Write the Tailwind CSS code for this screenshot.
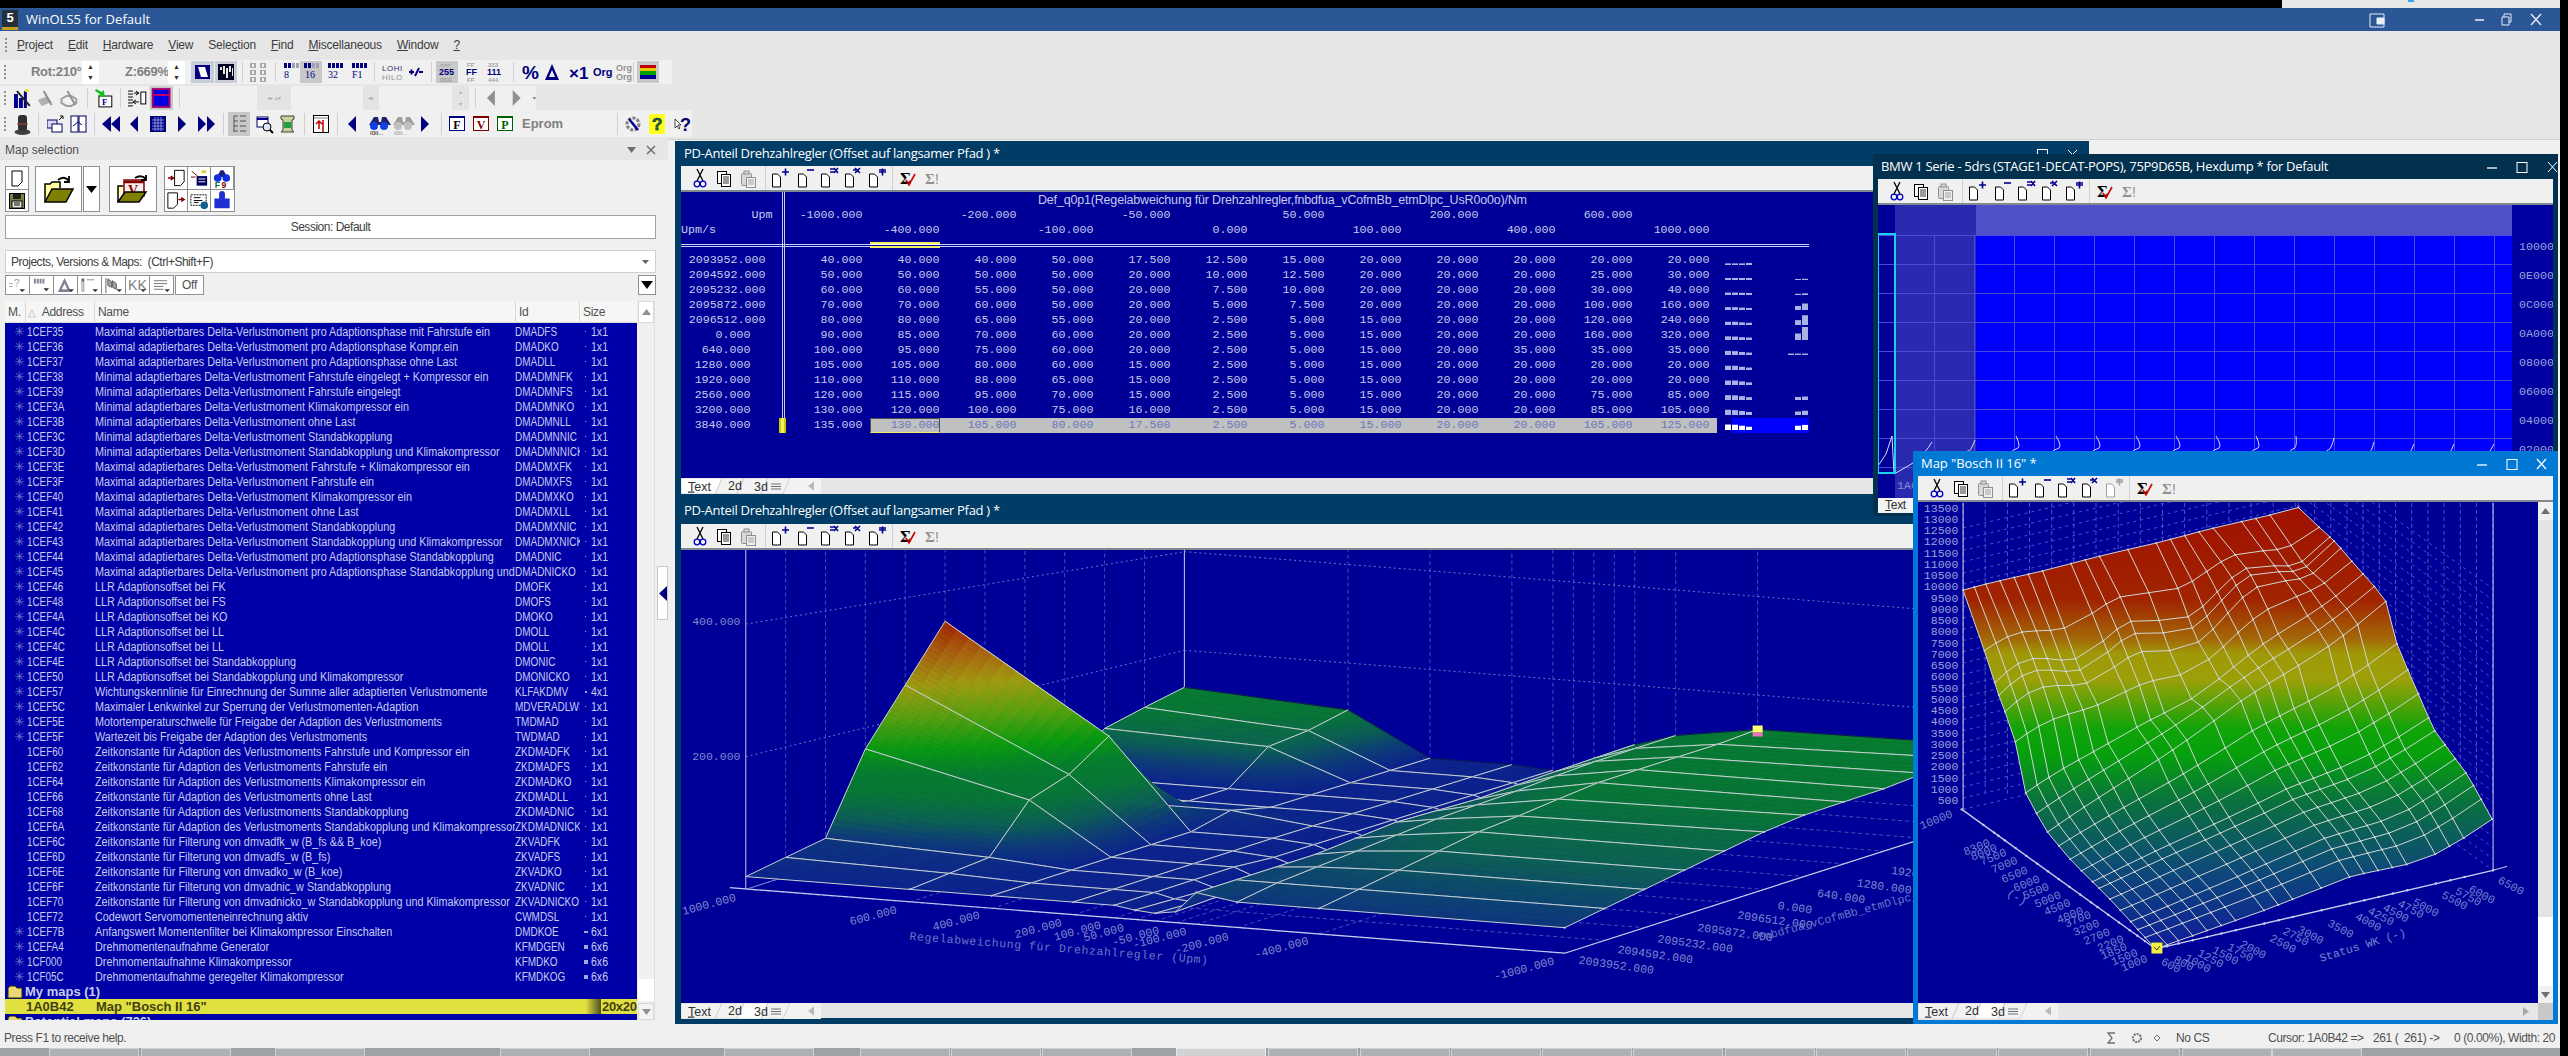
<!DOCTYPE html>
<html lang="en">
<head>
<meta charset="UTF-8">
<title>WinOLS5 for Default</title>
<script src="https://cdn.jsdelivr.net/npm/@tailwindcss/browser@4"></script>
</head>
<body class="w-[2568px] h-[1056px] overflow-hidden bg-black [font-family:'Liberation_Sans',sans-serif] text-[12px]">
<div class="w-[2560px] h-full flex flex-col">

  <!-- top strip -->
  <div class="h-[8px] flex shrink-0">
    <div class="w-[2282px] bg-black"></div>
    <div class="flex-1 bg-[#e8e8e8] pl-[126px]"><div class="w-[6px] h-[2px] bg-[#3ba4e8]"></div></div>
  </div>

  <!-- title bar -->
  <div class="h-[23px] shrink-0 bg-[#2b5797] flex items-center text-white">
    <div class="ml-[2px] w-[16px] h-[20px] bg-[#24303a] text-white text-[13px] font-bold leading-[16px] text-center border-b-[3px] border-[#c8a020]">5</div>
    <div class="ml-[8px] text-[13px] [font-family:'Open_Sans',sans-serif] tracking-[0.05px]">WinOLS5 for Default</div>
    <svg class="ml-auto mr-[7px]" width="184" height="20" viewBox="0 0 184 20" fill="none" stroke="#e8eef8">
      <path d="M1 4h14v13H1z" /><path d="M8 8h7v6H8z" fill="#e8eef8" />
      <path d="M106 10h9" stroke-width="1.5" />
      <path d="M133 7h7v8h-7zM135 7V4h7v8h-2" />
      <path d="M162 4l10 11M172 4l-10 11" stroke-width="1.4" />
    </svg>
  </div>

  <!-- menu -->
  <div class="h-[27px] shrink-0 bg-[#e6e6e6] flex items-center pl-[5px] text-[12px] text-[#3c3c3c] tracking-[-0.2px]">
    <div class="w-[2px] h-[14px] mr-[10px] border-l-2 border-dotted border-[#909090]"></div>
    <div class="flex gap-[15px]">
      <span><u>P</u>roject</span><span><u>E</u>dit</span><span><u>H</u>ardware</span><span><u>V</u>iew</span><span>Sele<u>c</u>tion</span><span><u>F</u>ind</span><span><u>M</u>iscellaneous</span><span><u>W</u>indow</span><span><u>?</u></span>
    </div>
  </div>

  <!-- toolbars -->
  <div class="h-[81px] shrink-0 bg-[#e6e6e6] flex flex-col">
    <!-- row 1 -->
    <div class="mt-[2px] h-[24px] w-[672px] bg-[#f0f0f0] flex items-center pl-[4px]">
      <div class="w-[2px] h-[14px] border-l-2 border-dotted border-[#909090]"></div>
      <div class="ml-[25px] w-[51px] text-[13px] font-bold tracking-[-0.3px] whitespace-nowrap text-[#808080]">Rot:210°</div>
      <div class="w-[17px] h-[23px] bg-white flex flex-col items-center justify-around text-[7px] leading-none text-[#333]"><span>▲</span><span>▼</span></div>
      <div class="ml-[26px] w-[43px] text-[13px] font-bold tracking-[-0.3px] whitespace-nowrap text-[#808080]">Z:669%</div>
      <div class="w-[17px] h-[23px] bg-white flex flex-col items-center justify-around text-[7px] leading-none text-[#333]"><span>▲</span><span>▼</span></div>
      <svg class="ml-[6px]" width="47" height="22" viewBox="0 0 47 22">
        <rect width="23" height="22" fill="#c8ccd4" /><rect x="24" width="22" height="22" fill="#c8ccd4" />
        <rect x="4" y="4" width="15" height="14" fill="#000080" /><path d="M7 6h7l3 10H10z" fill="#fff" />
        <rect x="27" y="3" width="16" height="16" fill="#000020" /><path d="M29 6h2v3h-2zM32 5h2v8h-2zM35 7h2v10h-2zM38 5h2v6h-2zM41 7h1v8h-1z" fill="#e8e8e8" />
      </svg>
      <div class="ml-[4px] w-px h-[20px] bg-[#d0d0d0]"></div>
      <svg class="ml-[7px]" width="17" height="20" viewBox="0 0 17 20"><path d="M0 1h6v5H0zM10 1h6v5h-6zM0 8h6v5H0zM10 8h6v5h-6zM0 15h6v5H0zM10 15h6v5h-6z" fill="#a8a8a8" /><path d="M2 2h2v3H2zM12 2h2v3h-2zM2 9h2v3H2zM12 9h2v3h-2zM2 16h2v3H2zM12 16h2v3h-2z" fill="#f0f0f0" /></svg>
      <div class="ml-[8px] w-px h-[20px] bg-[#d0d0d0]"></div>
      <svg class="ml-[4px]" width="92" height="22" viewBox="0 0 92 22" font-family="Liberation Serif" font-size="10" fill="#000080">
        <rect x="20" width="22" height="22" fill="#c8c8c8" />
        <path d="M4 2h3v5H4zM8 2h3v5H8z" /><path d="M12 2h3v5h-3zM16 2h3v5h-3z" fill="#a0a0b0" /><text x="4" y="17">8</text>
        <path d="M24 2h3v5h-3zM28 2h3v5h-3z" /><path d="M32 2h3v5h-3zM36 2h3v5h-3z" fill="#a0a0b0" /><text x="25" y="17">16</text>
        <path d="M48 2h3v5h-3zM52 2h3v5h-3zM56 2h3v5h-3zM60 2h3v5h-3z" /><text x="48" y="17">32</text>
        <path d="M72 2h3v5h-3zM76 2h3v5h-3zM80 2h3v5h-3zM84 2h3v5h-3z" /><text x="72" y="17">F1</text>
      </svg>
      <div class="ml-[2px] w-px h-[20px] bg-[#d0d0d0]"></div>
      <svg class="ml-[7px]" width="42" height="20" viewBox="0 0 42 20" font-family="Liberation Sans" font-size="8" letter-spacing="0.5">
        <text x="0" y="9" fill="#303060">LOHI</text><text x="0" y="18" fill="#909090">HILO</text>
        <path d="M27 10h5M29.5 7.500v5M33 14l4-8M37 10h4" stroke="#000080" stroke-width="2" />
      </svg>
      <div class="ml-[7px] w-px h-[20px] bg-[#d0d0d0]"></div>
      <svg class="ml-[4px]" width="68" height="22" viewBox="0 0 68 22" font-family="Liberation Sans" font-size="9" font-weight="bold">
        <rect width="22" height="22" fill="#c8c8c8" />
        <text x="4" y="6" fill="#a0a0a0" font-size="6">&lt;&gt;&gt;</text><text x="3" y="14" fill="#000080">255</text><text x="4" y="21" fill="#a0a0a0" font-size="6">DEE</text>
        <text x="31" y="6" fill="#a0a0a0" font-size="6">FF</text><text x="30" y="14" fill="#000080">FF</text><text x="31" y="21" fill="#a0a0a0" font-size="6">FF</text>
        <text x="52" y="6" fill="#a0a0a0" font-size="6">333</text><text x="51" y="14" fill="#000080">111</text><text x="52" y="21" fill="#a0a0a0" font-size="6">444</text>
      </svg>
      <div class="ml-[9px] w-px h-[20px] bg-[#d0d0d0]"></div>
      <svg class="ml-[8px]" width="112" height="22" viewBox="0 0 112 22" font-family="Liberation Sans" font-weight="bold" fill="#000080">
        <text x="0" y="18" font-size="19">%</text>
        <path d="M30 3l-7 16h14zM30 9l-3 7h6z" fill-rule="evenodd" />
        <text x="47" y="18" font-size="17">×1</text>
        <text x="71" y="15" font-size="11">Org</text>
        <text x="94" y="10" font-size="9" fill="#909090">Org</text><text x="94" y="19" font-size="9" fill="#909090">Org</text>
      </svg>
      <div class="ml-[-1px] w-px h-[20px] bg-[#d0d0d0]"></div>
      <svg class="ml-[3px]" width="22" height="22" viewBox="0 0 22 22"><rect width="22" height="22" fill="#c8c8c8" /><rect x="3" y="4" width="16" height="3" fill="#c00000" /><rect x="3" y="7" width="16" height="3" fill="#e8c800" /><rect x="3" y="10" width="16" height="4" fill="#00a000" /><rect x="3" y="14" width="16" height="4" fill="#000090" /></svg>
    </div>
    <!-- row 2 -->
    <div class="mt-[2px] h-[24px] w-[536px] bg-[#f0f0f0] flex items-center pl-[4px]">
      <div class="w-[2px] h-[14px] border-l-2 border-dotted border-[#909090]"></div>
      <svg class="ml-[8px]" width="66" height="20" viewBox="0 0 66 20">
        <path d="M0 6h4v14H0zM5 10h4v10H5zM10 3h3v17h-3z" fill="#000090" /><path d="M3 3l13 15" stroke="#202020" stroke-width="2" /><path d="M11 1h4v3h-4z" fill="#e8e040" />
        <path d="M24 12l10-4 4 6-10 4z" fill="#b0b0b0" /><path d="M30 3l8 14" stroke="#909090" stroke-width="2" />
        <path d="M48 11l5-3h5l5 3v4l-5 3h-5l-5-3z" fill="none" stroke="#a0a0a0" stroke-width="2" /><path d="M54 3l8 14" stroke="#909090" stroke-width="2" />
      </svg>
      <div class="ml-[8px] w-px h-[20px] bg-[#d0d0d0]"></div>
      <svg class="ml-[7px]" width="18" height="20" viewBox="0 0 18 20"><rect x="4" y="8" width="13" height="11" fill="#fff" stroke="#000" /><text x="7" y="17" font-size="9" font-weight="bold" font-family="Liberation Serif" fill="#000080">F</text><path d="M1 1l6 3 2-2 1 7-7-1 2-2-5-3z" fill="#10c020" /></svg>
      <div class="ml-[7px] w-px h-[20px] bg-[#d0d0d0]"></div>
      <svg class="ml-[7px]" width="46" height="24" viewBox="0 0 46 24">
        <path d="M0 5h5M0 8h5M0 11h5M0 14h5M0 17h5M0 20h5" stroke="#000" /><path d="M6 7h5M8 5l3 2-3 2M11 16H6M8 14l-3 2 3 2" stroke="#000" fill="none" /><rect x="13" y="6" width="5" height="12" fill="#fff" stroke="#000" />
        <rect x="22" width="24" height="24" fill="#c8c8c8" /><rect x="25" y="3" width="17" height="18" fill="#0000e0" stroke="#a00070" stroke-width="2" /><path d="M25 9h17" stroke="#c00060" stroke-width="2" />
      </svg>
      <div class="ml-[6px] w-px h-[20px] bg-[#d0d0d0]"></div>
      <div class="ml-[77px] w-[34px] h-[24px] bg-[#e4e4e4] text-[6px] text-[#b0b0b0] flex items-center justify-center">◂▸ ▴▾</div>
      <div class="ml-[72px] w-[16px] h-[24px] bg-[#e4e4e4] text-[6px] text-[#b0b0b0] flex items-center justify-center">◂▸</div>
      <div class="ml-[73px] w-[17px] h-[24px] bg-[#e4e4e4] text-[6px] text-[#b0b0b0] flex flex-col items-center justify-around"><span>▴</span><span>▾</span></div>
      <div class="ml-[6px] w-px h-[20px] bg-[#d0d0d0]"></div>
      <svg class="ml-[11px]" width="50" height="18" viewBox="0 0 50 18" fill="#909090"><path d="M8 1v16L0 9zM26 1v16l8-8zM46 8h4l-2 3z" /></svg>
    </div>
    <!-- row 3 -->
    <div class="h-[27px] w-[692px] bg-[#f0f0f0] flex items-center pl-[4px]">
      <div class="w-[2px] h-[14px] border-l-2 border-dotted border-[#909090]"></div>
      <svg class="ml-[8px]" width="17" height="22" viewBox="0 0 17 22"><ellipse cx="8.500" cy="19" rx="8" ry="3" fill="#404040" /><rect x="4" y="2" width="9" height="16" rx="3" fill="#303030" /><path d="M3 11h11" stroke="#b04040" /></svg>
      <div class="ml-[7px] w-px h-[22px] bg-[#d0d0d0]"></div>
      <svg class="ml-[8px]" width="40" height="20" viewBox="0 0 40 20"><rect x="0" y="6" width="10" height="8" fill="#d8d8f0" stroke="#000060" /><rect x="5" y="10" width="10" height="8" fill="#fff" stroke="#000060" /><path d="M12 6l4-4M13 2h3v3" stroke="#000" fill="none" /><rect x="24" y="2" width="7" height="16" fill="#fff" stroke="#000060" /><rect x="32" y="2" width="7" height="16" fill="#fff" stroke="#000060" /><path d="M26 12l5-4 4 3" stroke="#000060" fill="none" /></svg>
      <div class="ml-[7px] w-px h-[22px] bg-[#d0d0d0]"></div>
      <svg class="ml-[7px]" width="116" height="20" viewBox="0 0 116 20" fill="#000080">
        <path d="M9 2v16L0 10zM18 2v16L9 10zM36 2v16l-8-8z" />
        <rect x="48" y="2" width="16" height="16" /><path d="M50 6h12M50 9h12M50 12h12M50 15h12M53 3v14M56 3v14M59 3v14" stroke="#8090e0" />
        <path d="M76 2v16l8-8zM96 2v16l8-8zM105 2v16l8-8z" />
      </svg>
      <div class="ml-[5px] w-[1px] h-[22px] bg-[#d0d0d0]"></div>
      <svg class="ml-[4px]" width="68" height="24" viewBox="0 0 68 24">
        <rect width="22" height="24" fill="#c8c8c8" /><path d="M6 4h4M6 4v16M6 9h4M6 14h4M6 19h4M12 4h6M12 9h6M12 14h6M12 19h6" stroke="#505060" fill="none" />
        <rect x="29" y="5" width="11" height="10" fill="#fff" stroke="#000060" /><path d="M29 7h11" stroke="#000090" stroke-width="2" /><circle cx="39" cy="15" r="4" fill="#d8e8f8" stroke="#000" /><path d="M42 18l3 3" stroke="#000" stroke-width="2" />
        <path d="M53 4h13v3l-2 1v10l2 2H53l2-2V8l-2-1z" fill="#c8d0a0" stroke="#404030" /><rect x="56" y="10" width="7" height="6" fill="#20a040" />
      </svg>
      <div class="ml-[8px] w-px h-[22px] bg-[#d0d0d0]"></div>
      <svg class="ml-[8px]" width="16" height="20" viewBox="0 0 16 20"><rect x="0.500" y="1.500" width="15" height="17" fill="#fff" stroke="#000" /><path d="M1 4h14" stroke="#808080" /><path d="M10 6v12M6 15V8M3 10l3-3 3 3" stroke="#c00000" fill="none" stroke-width="1.500" /></svg>
      <div class="ml-[8px] w-px h-[22px] bg-[#d0d0d0]"></div>
      <svg class="ml-[10px]" width="82" height="22" viewBox="0 0 82 22">
        <path d="M8 3v16L0 11z" fill="#000080" />
        <path d="M21 12l5-8h4l1 5h2l1-5h4l5 8" fill="#202070" /><circle cx="26" cy="13" r="4" fill="#1040e0" /><circle cx="36" cy="13" r="4" fill="#1040e0" /><text x="22" y="22" font-size="6" fill="#000">I0II...</text>
        <path d="M45 12l5-8h4l1 5h2l1-5h4l5 8" fill="#a0a0a0" /><circle cx="50" cy="13" r="4" fill="#c0c0c0" /><circle cx="60" cy="13" r="4" fill="#c0c0c0" /><text x="46" y="22" font-size="6" fill="#909090">I0II...</text>
        <path d="M73 3v16l8-8z" fill="#000080" />
      </svg>
      <div class="ml-[11px] w-px h-[22px] bg-[#d0d0d0]"></div>
      <svg class="ml-[7px]" width="66" height="18" viewBox="0 0 66 18" font-family="Liberation Serif" font-size="12" font-weight="bold" text-anchor="middle">
        <rect x="0.500" y="1.500" width="15" height="14" fill="#fff" stroke="#000080" /><path d="M0 2h16" stroke="#000080" stroke-width="2" /><text x="8" y="14" fill="#000">F</text>
        <rect x="24.500" y="1.500" width="15" height="14" fill="#fff" stroke="#800000" /><path d="M24 2h16" stroke="#800000" stroke-width="2" /><text x="32" y="14" fill="#800000">V</text>
        <rect x="48.500" y="1.500" width="15" height="14" fill="#fff" stroke="#006000" /><path d="M48 2h16" stroke="#006000" stroke-width="2" /><text x="56" y="14" fill="#006000">P</text>
      </svg>
      <div class="ml-[7px] w-[95px] text-[13px] font-bold text-[#808080]">Eprom</div>
      <div class="w-px h-[22px] bg-[#d0d0d0]"></div>
      <svg class="ml-[7px]" width="66" height="20" viewBox="0 0 66 20">
        <circle cx="8" cy="10" r="6" fill="none" stroke="#808080" stroke-width="3" stroke-dasharray="3 1.500" /><path d="M4 5l9 11" stroke="#000090" stroke-width="2.500" />
        <rect x="24" y="0" width="16" height="20" fill="#ffff20" /><text x="27" y="16" font-size="17" font-weight="bold" fill="#107070" stroke="#000" stroke-width="0.500">?</text>
        <path d="M50 5v9l2-2 2 3 1-1-2-3h3z" fill="#fff" stroke="#000" stroke-width="0.700" /><text x="55" y="17" font-size="18" font-weight="bold" fill="#000070">?</text>
      </svg>
    </div>
  </div>

  <!-- work area -->
  <div class="relative z-10 flex-1 flex min-h-0">
    <!-- map selection panel -->
    <div class="w-[668px] shrink-0 flex flex-col bg-[#f0f0f0]">
      <div class="h-[21px] shrink-0 bg-[#e6e6e6] flex items-center pl-[5px] pr-[7px] text-[12px] text-[#505050]">
        <span>Map selection</span>
        <svg class="ml-auto" width="34" height="12" viewBox="0 0 34 12"><path d="M0 3h9l-4.500 6z" fill="#707070" /><path d="M20 2l8 8M28 2l-8 8" stroke="#707070" stroke-width="1.500" /></svg>
      </div>
      <div class="flex-1 min-h-0 pl-[5px] pr-[12px] pt-[6px] flex flex-col">
        <!-- big icons -->
        <div class="h-[46px] flex shrink-0">
          <div class="w-[24px] flex flex-col border border-[#909090] bg-white">
            <div class="h-[23px] border-b border-[#909090] flex items-center justify-center"><svg width="12" height="17" viewBox="0 0 12 17"><path d="M1 1h10v11l-4 4H1z" fill="#fff" stroke="#000" /></svg></div>
            <div class="flex-1 flex items-center justify-center"><svg width="16" height="16" viewBox="0 0 16 16"><rect x="0.500" y="0.500" width="15" height="15" fill="#808040" stroke="#000" /><rect x="4" y="1" width="8" height="5" fill="#202020" /><rect x="3" y="8" width="10" height="7" fill="#e8e8e8" stroke="#000" /><path d="M5 10h6M5 12h6" stroke="#000" /></svg></div>
          </div>
          <div class="ml-[6px] w-[47px] border border-[#909090] bg-white flex items-center justify-center"><svg width="30" height="30" viewBox="0 0 30 30"><path d="M1 28V10h5l2-2h8v6" fill="#ffffa0" stroke="#000" stroke-width="1.500" /><path d="M1 28l7-13h21l-7 13z" fill="#808000" stroke="#000" stroke-width="1.500" /><path d="M14 6q6-5 11 1M25 2v6h-5" fill="none" stroke="#000" stroke-width="1.800" /></svg></div>
          <div class="ml-px w-[17px] border border-[#909090] bg-white flex items-center justify-center"><svg width="11" height="7" viewBox="0 0 11 7"><path d="M0 0h11L5.500 7z" fill="#000" /></svg></div>
          <div class="ml-[9px] w-[48px] border border-[#909090] bg-white flex items-center justify-center"><svg width="32" height="30" viewBox="0 0 32 30"><rect x="7" y="6" width="20" height="16" fill="#f8f0f0" stroke="#800000" stroke-width="1.500" /><path d="M7 8h20" stroke="#800000" stroke-width="2.500" /><text x="11" y="21" font-size="14" font-weight="bold" font-family="Liberation Serif" fill="#900000">V</text><path d="M1 28V12h5" fill="#ffffa0" stroke="#000" stroke-width="1.500" /><path d="M1 28l7-10h21l-7 10z" fill="#808000" stroke="#000" stroke-width="1.500" /><path d="M18 4q6-4 11 1M29 1v5h-5" fill="none" stroke="#000" stroke-width="1.800" /></svg></div>
          <div class="ml-[7px] w-[71px] grid grid-cols-3 border border-[#909090] bg-white divide-x divide-[#909090]">
            <svg width="23" height="22" viewBox="0 0 23 22"><path d="M3 11h5M6 9l3 2-3 2" stroke="#800000" fill="none" stroke-width="1.500" /><path d="M10 3h10v12l-4 4h-6z" fill="#fff" stroke="#000" /></svg>
            <svg width="23" height="22" viewBox="0 0 23 22"><rect x="9" y="9" width="11" height="10" fill="#000060" /><path d="M11 12h7M11 15h7" stroke="#fff" /><path d="M3 10h5M4 4l6 5" stroke="#800000" /><path d="M14 3h5v3h-5z" fill="#e0d040" /></svg>
            <svg width="23" height="22" viewBox="0 0 23 22"><path d="M6 10l4-7h3l4 7" fill="#202070" /><circle cx="7" cy="11" r="4" fill="#1030e0" /><circle cx="16" cy="11" r="4" fill="#1030e0" /><text x="4" y="21" font-size="9" font-weight="bold" fill="#007030">F</text><text x="11" y="21" font-size="9" font-weight="bold" fill="#800000">9</text></svg>
            <svg class="col-start-1 border-t border-[#909090]" width="23" height="23" viewBox="0 0 23 23"><path d="M3 3h10v12l-4 4H3z" fill="#fff" stroke="#000" /><path d="M14 10h5M17 8l3 2-3 2" stroke="#800000" fill="none" stroke-width="1.500" /></svg>
            <svg class="border-t border-[#909090]" width="23" height="23" viewBox="0 0 23 23"><rect x="3" y="5" width="16" height="11" fill="#fff" stroke="#000" stroke-dasharray="2 1" /><path d="M6 8h7M6 11h9M6 13h5" stroke="#000" /><circle cx="17" cy="16" r="4" fill="#106090" /></svg>
            <svg class="border-t border-[#909090]" width="23" height="23" viewBox="0 0 23 23"><path d="M3 9h5V4h6v5h5v10H3z" fill="#2030d0" /><circle cx="11" cy="4" r="3" fill="#2030d0" /></svg>
          </div>
        </div>
        <div class="mt-[3px] h-[24px] shrink-0 border border-[#a0a0a0] bg-white flex items-center justify-center text-[12px] tracking-[-0.48px] text-[#404040]">Session: Default</div>
        <div class="mt-[11px] h-[23px] shrink-0 border border-[#d0d0d0] bg-white flex items-center px-[5px] text-[12px] tracking-[-0.48px] text-[#404040]">
          <span>Projects, Versions &amp; Maps:&nbsp; (Ctrl+Shift+F)</span>
          <svg class="ml-auto mr-[1px]" width="7" height="4" viewBox="0 0 7 4"><path d="M0 0h7L3.500 4z" fill="#606060" /></svg>
        </div>
        <!-- filter buttons -->
        <div class="mt-[2px] h-[20px] shrink-0 flex">
          <div id="filters" class="flex"></div>
          <div class="w-[29px] h-[20px] border border-[#909090] bg-white text-[12px] tracking-[-0.3px] text-[#505050] flex items-center justify-center">Off</div>
          <div class="ml-auto w-[18px] h-[20px] border border-[#909090] bg-white flex items-center justify-center"><svg width="12" height="8" viewBox="0 0 12 8"><path d="M0 0h12L6 8z" fill="#000" /></svg></div>
        </div>
        <!-- list -->
        <div class="mt-[6px] flex-1 min-h-0 flex overflow-hidden">
          <div class="w-[632px] flex flex-col min-h-0">
            <div class="h-[22px] shrink-0 flex bg-[#f6f6f6] text-[12px] tracking-[-0.3px] text-[#505050] leading-[22px] divide-x divide-[#d8d8d8] border-b border-[#d8d8d8]">
              <div class="w-[21px] pl-[3px]">M.</div>
              <div class="w-[69px] pl-[2px]"><span class="text-[#b0b0b0] text-[10px]">△</span>&nbsp;&nbsp;Address</div>
              <div class="w-[421px] pl-[3px]">Name</div>
              <div class="w-[64px] pl-[3px]">Id</div>
              <div class="w-[57px] pl-[3px]">Size</div>
            </div>
            <div id="maplist" class="flex-1 min-h-0 overflow-hidden bg-[#0000a8] pt-px"></div>
          </div>
          <div class="w-[17px] ml-px flex flex-col bg-[#f0f0f0] border-r border-[#e0e0e0]">
            <div class="h-[22px] bg-white border border-[#d8d8d8] flex items-center justify-center"><svg width="9" height="6" viewBox="0 0 9 6"><path d="M0 6h9L4.500 0z" fill="#909090" /></svg></div>
            <div class="flex-1"></div>
            <div class="h-[22px] bg-white"></div>
            <div class="mt-[2px] h-[17px] bg-[#f4f4f4] border border-[#d8d8d8] flex items-center justify-center"><svg width="9" height="6" viewBox="0 0 9 6"><path d="M0 0h9L4.500 6z" fill="#909090" /></svg></div>
          </div>
        </div>
      </div>
    </div>

    <!-- windows on the MDI desktop -->
    <div class="relative flex-1 bg-[#f0f0f0] border-t border-[#d0d0d0]">
      <div class="absolute left-[-11px] top-[426px] w-[11px] h-[54px] bg-white border border-[#c8c8c8] flex items-center justify-center"><svg width="8" height="15" viewBox="0 0 8 15"><path d="M8 0v15L0 7.500z" fill="#000080" /></svg></div>

      <!-- text window -->
      <div class="absolute left-[7px] top-[1px] w-[1414px] h-[358px] bg-[#003c66] pl-[6px] flex flex-col">
        <div class="h-[25px] shrink-0 flex items-center pl-[3px] pr-[10px] text-white text-[13px] [font-family:'Open_Sans',sans-serif] tracking-[-0.3px]">
          <span>PD-Anteil Drehzahlregler (Offset auf langsamer Pfad ) *</span>
          <svg class="ml-auto" width="42" height="12" viewBox="0 0 42 12" fill="none" stroke="#fff"><rect x="0.500" y="1.500" width="10" height="10" /><path d="M31 2l9 9M40 2l-9 9" /></svg>
        </div>
        <div data-tools class="h-[26px] shrink-0 bg-[#f0f0f0] border-b-2 border-[#808890]"></div>
        <div class="relative h-[286px] shrink-0 bg-[#000099] [font-family:'Liberation_Mono',monospace] text-[11.67px] leading-[15px] text-[#c4cbec]">
          <div class="absolute left-[189px] top-[226px] w-[847px] h-[15px] bg-[#c0c0c0]"></div>
          <div class="absolute left-[1051px] top-[226px] w-[77px] h-[15px] bg-[#0000ff]"></div>
          <div id="sheet" class="relative"></div>
          <div class="absolute left-[0px] top-[52px] w-[1128px] h-[3px] border-y border-[#c8cef0]"></div>
          <div class="absolute left-[101px] top-[0px] w-[3px] h-[241px] border-x border-[#c8cef0]"></div>
          <div class="absolute left-[189px] top-[50px] w-[70px] h-[6px] bg-[#000099] border-y-2 border-[#f0f060]"><div class="h-px mt-0 bg-white"></div></div>
          <div class="absolute left-[98px] top-[226px] w-[7px] h-[15px] bg-[#f0f060] border-x-2 border-[#d0c800]"></div>
          <div class="absolute left-[189px] top-[226px] w-[70px] h-[15px] border border-[#505050] border-b-[#f0f060]"></div>
          <svg id="spark" class="absolute left-[1044px] top-[61px]" width="86" height="180" viewBox="0 0 86 180"></svg>
        </div>
        <div data-tabs="0" class="h-[16px] shrink-0 bg-[#e6e6e6]"></div>
      </div>

      <!-- 3d window -->
      <div class="absolute left-[7px] top-[358px] w-[1255px] h-[526px] bg-[#003c66] pl-[6px] flex flex-col">
        <div class="h-[26px] shrink-0 flex items-center pl-[3px] text-white text-[13px] [font-family:'Open_Sans',sans-serif] tracking-[-0.3px]">PD-Anteil Drehzahlregler (Offset auf langsamer Pfad ) *</div>
        <div data-tools class="h-[26px] shrink-0 bg-[#f0f0f0] border-b-2 border-[#808890]"></div>
        <svg id="surface" class="h-[453px] shrink-0 bg-[#000099] w-full [font-family:'Liberation_Mono',monospace] text-[11.500px]"></svg>
        <div data-tabs="2" class="h-[15px] shrink-0 bg-[#e6e6e6]"></div>
      </div>

      <!-- hexdump window -->
      <div class="absolute left-[1205px] top-[14px] w-[685px] h-[362px] bg-[#02304f] pl-[5px] pr-[5px] flex flex-col overflow-hidden">
        <div class="h-[25px] shrink-0 flex items-center text-white text-[13px] [font-family:'Open_Sans',sans-serif] tracking-[-0.3px] whitespace-nowrap">
          <span class="pl-[3px]">BMW 1 Serie - 5drs (STAGE1-DECAT-POPS), 75P9D65B, Hexdump * for Default</span>
          <svg class="ml-auto shrink-0 mr-[-9px]" width="76" height="14" viewBox="0 0 76 14" fill="none" stroke="#fff"><path d="M1 8h10" stroke-width="1.300" /><rect x="31" y="2.500" width="10" height="10" /><path d="M62 2l9 10M71 2l-9 10" /></svg>
        </div>
        <div data-tools class="h-[26px] shrink-0 bg-[#f0f0f0] border-b-2 border-[#808890]"></div>
        <svg id="hex" class="h-[293px] shrink-0 w-full bg-[#000099] [font-family:'Liberation_Mono',monospace] text-[11.670px]"></svg>
        <div class="h-[15px] w-[35px] shrink-0 bg-[#f4f4f4] text-[12px] leading-[15px] text-center text-[#303030] tracking-[-0.3px]"><u>T</u>ext</div>
      </div>

      <!-- map window -->
      <div class="absolute left-[1245px] top-[311px] w-[645px] h-[573px] bg-[#0078d4] px-[5px] flex flex-col">
        <div class="h-[25px] shrink-0 flex items-center text-white text-[13px] [font-family:'Open_Sans',sans-serif] tracking-[-0.05px] pl-[3px]">
          <span>Map "Bosch II 16" *</span>
          <svg class="ml-auto mr-[5px]" width="72" height="14" viewBox="0 0 72 14" fill="none" stroke="#fff"><path d="M1 8h10" stroke-width="1.300" /><rect x="31" y="2.500" width="10" height="10" /><path d="M61 2l9 10M70 2l-9 10" stroke-width="1.300" /></svg>
        </div>
        <div data-tools="dim" class="h-[26px] shrink-0 bg-[#f0f0f0] border-b-2 border-[#808890]"></div>
        <div class="flex flex-1 min-h-0">
          <svg id="mapsurface" class="flex-1 min-w-0 h-full bg-[#000099] [font-family:'Liberation_Mono',monospace] text-[11.500px]"></svg>
          <div class="w-[15px] shrink-0 bg-[#e4e4e4] flex flex-col">
            <div class="h-[18px] bg-[#f0f0f0] flex items-center justify-center"><svg width="9" height="6" viewBox="0 0 9 6"><path d="M0 6h9L4.500 0z" fill="#707070" /></svg></div>
            <div class="flex-1"></div>
            <div class="h-[69px] bg-white"></div>
            <div class="h-[17px] bg-[#f0f0f0] flex items-center justify-center"><svg width="9" height="6" viewBox="0 0 9 6"><path d="M0 0h9L4.500 6z" fill="#707070" /></svg></div>
          </div>
        </div>
        <div class="h-[17px] shrink-0 flex bg-[#e6e6e6]">
          <div data-tabs="2" class="flex-1 min-w-0"></div>
          <div class="w-[15px] flex items-center justify-start"><svg width="7" height="9" viewBox="0 0 7 9"><path d="M0 0v9l6-4.500z" fill="#a8a8a8" /></svg></div>
          <div class="w-[15px] bg-[#c8c8c8]"></div>
        </div>
        <div class="h-[4px] shrink-0"></div>
      </div>
    </div>
  </div>

  <!-- status bar -->
  <div class="h-[28px] shrink-0 bg-[#f0f0f0] flex items-center pl-[4px] pr-[5px] text-[12px] text-[#505050] tracking-[-0.42px] whitespace-nowrap">
    <span class="pt-[8px]">Press F1 to receive help.</span>
    <div class="ml-auto pt-[8px] flex items-center">
      <svg width="54" height="14" viewBox="0 0 54 14" fill="none" stroke="#707070"><path d="M8 2H1l4 5-4 5h7" stroke-width="1.300" /><circle cx="30" cy="7" r="4" stroke-width="2" stroke-dasharray="2 1" /><path d="M47 7l3-3 3 3-3 3zM47 7l3-3" /></svg>
      <span class="ml-[15px] w-[92px]">No CS</span>
      <span class="w-[105px]">Cursor: 1A0B42 =&gt;</span>
      <span class="w-[81px]">261 (&nbsp; 261) -&gt;</span>
      <span>0 (0.00%), Width: 20</span>
    </div>
  </div>

  <!-- taskbar -->
  <div id="taskbar" class="h-[8px] shrink-0 bg-[#9ea2a6] flex"></div>
</div>

<script>
const star = 1, none = 0;
const maps = [
  ['1CEF35','Maximal adaptierbares Delta-Verlustmoment pro Adaptionsphase mit Fahrstufe ein','DMADFS','1x1',star],
  ['1CEF36','Maximal adaptierbares Delta-Verlustmoment pro Adaptionsphase Kompr.ein','DMADKO','1x1',star],
  ['1CEF37','Maximal adaptierbares Delta-Verlustmoment pro Adaptionsphase ohne Last','DMADLL','1x1',star],
  ['1CEF38','Minimal adaptierbares Delta-Verlustmoment Fahrstufe eingelegt + Kompressor ein','DMADMNFK','1x1',star],
  ['1CEF39','Minimal adaptierbares Delta-Verlustmoment Fahrstufe eingelegt','DMADMNFS','1x1',star],
  ['1CEF3A','Minimal adaptierbares Delta-Verlustmoment Klimakompressor ein','DMADMNKO','1x1',star],
  ['1CEF3B','Minimal adaptierbares Delta-Verlustmoment ohne Last','DMADMNLL','1x1',star],
  ['1CEF3C','Minimal adaptierbares Delta-Verlustmoment Standabkopplung','DMADMNNIC','1x1',star],
  ['1CEF3D','Minimal adaptierbares Delta-Verlustmoment Standabkopplung und Klimakompressor','DMADMNNICK','1x1',star],
  ['1CEF3E','Maximal adaptierbares Delta-Verlustmoment Fahrstufe + Klimakompressor ein','DMADMXFK','1x1',star],
  ['1CEF3F','Maximal adaptierbares Delta-Verlustmoment Fahrstufe ein','DMADMXFS','1x1',star],
  ['1CEF40','Maximal adaptierbares Delta-Verlustmoment Klimakompressor ein','DMADMXKO','1x1',star],
  ['1CEF41','Maximal adaptierbares Delta-Verlustmoment ohne Last','DMADMXLL','1x1',star],
  ['1CEF42','Maximal adaptierbares Delta-Verlustmoment Standabkopplung','DMADMXNIC','1x1',star],
  ['1CEF43','Maximal adaptierbares Delta-Verlustmoment Standabkopplung und Klimakompressor','DMADMXNICK','1x1',star],
  ['1CEF44','Maximal adaptierbares Delta-Verlustmoment pro Adaptionsphase Standabkopplung','DMADNIC','1x1',star],
  ['1CEF45','Maximal adaptierbares Delta-Verlustmoment pro Adaptionsphase Standabkopplung und Klimakompressor','DMADNICKO','1x1',star],
  ['1CEF46','LLR Adaptionsoffset bei FK','DMOFK','1x1',star],
  ['1CEF48','LLR Adaptionsoffset bei FS','DMOFS','1x1',star],
  ['1CEF4A','LLR Adaptionsoffset bei KO','DMOKO','1x1',star],
  ['1CEF4C','LLR Adaptionsoffset bei LL','DMOLL','1x1',star],
  ['1CEF4C','LLR Adaptionsoffset bei LL','DMOLL','1x1',star],
  ['1CEF4E','LLR Adaptionsoffset bei Standabkopplung','DMONIC','1x1',star],
  ['1CEF50','LLR Adaptionsoffset bei Standabkopplung und Klimakompressor','DMONICKO','1x1',star],
  ['1CEF57','Wichtungskennlinie für Einrechnung der Summe aller adaptierten Verlustmomente','KLFAKDMV','4x1',star],
  ['1CEF5C','Maximaler Lenkwinkel zur Sperrung der Verlustmomenten-Adaption','MDVERADLWS','1x1',star],
  ['1CEF5E','Motortemperaturschwelle für Freigabe der Adaption des Verlustmoments','TMDMAD','1x1',star],
  ['1CEF5F','Wartezeit bis Freigabe der Adaption des Verlustmoments','TWDMAD','1x1',star],
  ['1CEF60','Zeitkonstante für Adaption des Verlustmoments Fahrstufe und Kompressor ein','ZKDMADFK','1x1',none],
  ['1CEF62','Zeitkonstante für Adaption des Verlustmoments Fahrstufe ein','ZKDMADFS','1x1',none],
  ['1CEF64','Zeitkonstante für Adaption des Verlustmoments Klimakompressor ein','ZKDMADKO','1x1',none],
  ['1CEF66','Zeitkonstante für Adaption des Verlustmoments ohne Last','ZKDMADLL','1x1',none],
  ['1CEF68','Zeitkonstante für Adaption des Verlustmoments Standabkopplung','ZKDMADNIC','1x1',none],
  ['1CEF6A','Zeitkonstante für Adaption des Verlustmoments Standabkopplung und Klimakompressor','ZKDMADNICK','1x1',none],
  ['1CEF6C','Zeitkonstante für Filterung von dmvadfk_w (B_fs && B_koe)','ZKVADFK','1x1',none],
  ['1CEF6D','Zeitkonstante für Filterung von dmvadfs_w (B_fs)','ZKVADFS','1x1',none],
  ['1CEF6E','Zeitkonstante für Filterung von dmvadko_w (B_koe)','ZKVADKO','1x1',none],
  ['1CEF6F','Zeitkonstante für Filterung von dmvadnic_w Standabkopplung','ZKVADNIC','1x1',none],
  ['1CEF70','Zeitkonstante für Filterung von dmvadnicko_w Standabkopplung und Klimakompressor','ZKVADNICKO','1x1',none],
  ['1CEF72','Codewort Servomomenteneinrechnung aktiv','CWMDSL','1x1',none],
  ['1CEF7B','Anfangswert Momentenfilter bei Klimakompressor Einschalten','DMDKOE','6x1',star],
  ['1CEFA4','Drehmomentenaufnahme Generator','KFMDGEN','6x6',star],
  ['1CF000','Drehmomentaufnahme Klimakompressor','KFMDKO','6x6',star],
  ['1CF05C','Drehmomentaufnahme geregelter Klimakompressor','KFMDKOG','6x6',star],
];
const esc = s => s.replace(/&/g, '&amp;').replace(/</g, '&lt;');
const markSize = { '1x1': 'w-px h-px', '4x1': 'w-[2px] h-[2px]', '6x1': 'w-[4px] h-[2px]', '6x6': 'w-[4px] h-[4px]' };
let rows = maps.map(m => `<div class="flex h-[15px] items-center whitespace-nowrap text-[12px] text-[#c6cdf2]">
  <span class="w-[22px] shrink-0 text-center text-[#6472c8] text-[13px] leading-[15px] pl-[7px]">${m[4] ? '✳' : ''}</span>
  <span class="w-[68px] shrink-0"><span class="inline-block origin-left scale-x-[0.82]">${m[0]}</span></span>
  <span class="w-[420px] shrink-0 overflow-hidden"><span class="inline-block origin-left scale-x-[0.9]">${esc(m[1])}</span></span>
  <span class="w-[65px] shrink-0 overflow-hidden"><span class="inline-block origin-left scale-x-[0.83]">${m[2]}</span></span>
  <span class="w-[11px] shrink-0 flex justify-center"><span class="${markSize[m[3]]} bg-[#a0a8e0]"></span></span>
  <span class="inline-block origin-left scale-x-[0.88]">${m[3]}</span>
</div>`).join('');
rows += `<div class="flex h-[15px] items-center text-[13px] font-bold text-[#c6cdf2] whitespace-nowrap"><svg class="ml-[2px] mr-[1px]" width="17" height="14" viewBox="0 0 17 14"><path d="M1 13V3l2-2h5l2 2h5v10z" fill="#e8d878" stroke="#302800" /></svg>My maps (1)</div>
<div class="flex h-[15px] items-center bg-[#e0e040] font-bold text-[13px] text-[#404010] whitespace-nowrap"><span class="ml-[21px] w-[70px]">1A0B42</span><span class="w-[490px]">Map "Bosch II 16"</span><span class="w-[15px] h-full bg-gradient-to-r from-[#e0e040] to-[#505020]"></span><span class="pl-[1px] tracking-[-0.3px]">20x20</span></div>
<div class="flex h-[15px] items-center text-[13px] font-bold text-[#c6cdf2] whitespace-nowrap"><svg class="ml-[2px] mr-[1px]" width="17" height="14" viewBox="0 0 17 14"><path d="M1 13V3l2-2h5l2 2h5v10z" fill="#e8d878" stroke="#302800" /></svg>Potential maps (736)</div>`;
document.getElementById('maplist').innerHTML = rows;

// little filter buttons above the list
const filterIcons = [
  '<path d="M3 8h4M3 11h4" stroke="#a0a0a0"/><text x="8" y="12" font-size="11" fill="#a0a0a0">?</text><path d="M14 14h6l-3 3z" fill="#303030"/>',
  '<path d="M4 3h2v5H4zM7 3h2v5H7zM10 3h2v5h-2zM13 3h2v5h-2z" fill="#808090"/><path d="M14 13h6l-3 3z" fill="#303030"/>',
  '<path d="M11 2l-7 15h14zM11 8l-3 6h6z" fill="#808090" fill-rule="evenodd"/><path d="M15 14h6l-3 3z" fill="#303030"/>',
  '<path d="M4 3h2v13H4zM9 4h8" stroke="#909090" fill="none"/><path d="M4 3h2v3H4z" fill="#606060"/><path d="M15 14h6l-3 3z" fill="#303030"/>',
  '<path d="M4 2v16M6 3l4 3v6l-4-2zM11 5l4 3v6l-4-2z" fill="#a0a0b0" stroke="#606060"/><path d="M15 14h6l-3 3z" fill="#303030"/>',
  '<text x="2" y="15" font-size="15" fill="#808080">KK</text><path d="M15 14h6l-3 3z" fill="#303030"/>',
  '<path d="M4 5h14M4 8h14M4 11h10M4 14h10" stroke="#707070"/><path d="M15 14h6l-3 3z" fill="#303030"/>',
];
document.getElementById('filters').innerHTML = filterIcons.map(i =>
  `<svg class="border border-[#909090] bg-white -mr-px" width="25" height="20" viewBox="0 0 24 19">${i}</svg>`).join('') + '<div class="w-[2px]"></div>';

// toolbar that every map window carries
function pageIcon(x, extra, gray) {
  const s = gray ? '#a0a0a0' : '#000', c = gray ? '#a0a0a0' : '#000090';
  return `<path d="M${x + .5} 8h5l3 3v10h-8z" fill="#fff" stroke="${s}"/><path d="${extra(x)}" stroke="${c}" stroke-width="1.600" fill="none"/>`;
}
function toolsSvg(dim) {
  return `<svg width="262" height="24" viewBox="0 0 262 24">
    <g stroke="#000" fill="none"><path d="M16 15L22 3M22 15L16 3" stroke-width="1.300"/><circle cx="16" cy="18" r="2.800" stroke="#0000c0" stroke-width="1.300"/><circle cx="22" cy="18" r="2.800" stroke="#0000c0" stroke-width="1.300"/></g>
    <g fill="#fff" stroke="#000"><rect x="36.500" y="5.500" width="9" height="12"/><rect x="40.500" y="8.500" width="9" height="12"/><path d="M42 11h6M42 13h6M42 15h6M42 17h6" stroke-width=".8"/></g>
    <g stroke="#909090" fill="#d8d8d8"><rect x="60.500" y="7.500" width="10" height="12" rx="1"/><rect x="63" y="5" width="5" height="3"/><rect x="65.500" y="11.500" width="9" height="10" fill="#f0f0f0"/><path d="M67 14h6M67 16h6M67 18h6" stroke-width=".8"/></g>
    <path d="M84.500 0v24M211.500 0v24" stroke="#d0d0d0"/>
    ${pageIcon(91, x => `M${x + 10} 6h7M${x + 13.500} 2.500v7`)}
    ${pageIcon(117, x => `M${x + 9} 4h7`)}
    ${pageIcon(140, x => `M${x + 9} 3h4M${x + 9} 6h4M${x + 13} 2l4 5M${x + 17} 2l-4 5`)}
    ${pageIcon(164, x => `M${x + 10} 2l5 5M${x + 15} 2l-5 5M${x + 8} 4h3`)}
    ${pageIcon(188, x => `M${x + 10} 6h7M${x + 13.500} 2.500v7M${x + 10} 4h7`, dim)}
    <text x="219" y="18" font-size="17" font-weight="bold" font-family="Liberation Serif" fill="#000">Σ</text><path d="M225 14l3 5 6-11" stroke="#d00000" stroke-width="1.600" fill="none"/>
    <text x="244" y="18" font-size="15" font-weight="bold" font-family="Liberation Serif" fill="#909090">Σ</text><text x="254" y="18" font-size="14" fill="#909090">!</text>
  </svg>`;
}
document.querySelectorAll('[data-tools]').forEach(d => { d.innerHTML = toolsSvg(d.dataset.tools === 'dim'); });

function tabsSvg(active) {
  const shape = ['M0 0h41l-7 16H0z', 'M34 16l7-16h22l-7 16z', 'M56 16l7-16h24l-7 16z'];
  const fills = [0, 1, 2].map(i => `<path d="${shape[i]}" fill="${i === active ? '#fff' : '#f2f2f2'}" stroke="#c0c0c0" stroke-width=".6"/>`);
  const order = [0, 1, 2].filter(i => i !== active).concat(active);
  return `<svg width="140" height="16" viewBox="0 0 140 16" font-size="12.500" fill="#303030">
    <rect width="140" height="16" fill="#f2f2f2"/>${order.map(i => fills[i]).join('')}
    <path d="M80 16l7-16h22l-7 16z" fill="#f2f2f2" stroke="#c0c0c0" stroke-width=".6"/>
    <text x="7" y="12.500" textLength="23"><tspan text-decoration="underline">T</tspan>ext</text>
    <text x="47" y="11.500">2d</text><text x="73" y="12.500">3d</text>
    <path d="M101 6h10M101 8.500h10M101 11h10" stroke="#707070" transform="translate(-11 0)"/>
    <path d="M133 3.500v9l-6-4.500z" fill="#b8b8b8"/>
  </svg>`;
}
document.querySelectorAll('[data-tabs]').forEach(d => { d.innerHTML = tabsSvg(+d.dataset.tabs); });

// text view of the PD map
const colAxis = [-1000, -400, -200, -100, -50, 0, 50, 100, 200, 400, 600, 1000];
const rowAxis = [2093952, 2094592, 2095232, 2095872, 2096512, 0, 640, 1280, 1920, 2560, 3200, 3840];
const data = [
  [40, 40, 40, 50, 17.5, 12.5, 15, 20, 20, 20, 20, 20],
  [50, 50, 50, 50, 20, 10, 12.5, 20, 20, 20, 25, 30],
  [60, 60, 55, 50, 20, 7.5, 10, 20, 20, 20, 30, 40],
  [70, 70, 60, 50, 20, 5, 7.5, 20, 20, 20, 100, 160],
  [80, 80, 65, 55, 20, 2.5, 5, 15, 20, 20, 120, 240],
  [90, 85, 70, 60, 20, 2.5, 5, 15, 20, 20, 160, 320],
  [100, 95, 75, 60, 20, 2.5, 5, 15, 20, 35, 35, 35],
  [105, 105, 80, 60, 15, 2.5, 5, 15, 20, 20, 20, 20],
  [110, 110, 88, 65, 15, 2.5, 5, 15, 20, 20, 20, 20],
  [120, 115, 95, 70, 15, 2.5, 5, 15, 20, 20, 75, 85],
  [130, 120, 100, 75, 16, 2.5, 5, 15, 20, 20, 85, 105],
  [135, 130, 105, 80, 17.5, 2.5, 5, 15, 20, 20, 105, 125],
];
const grid = 'grid grid-cols-[104.600px_repeat(12,77px)] h-[15px] text-right whitespace-nowrap';
let sheet = `<div class="h-[16px] pl-[357px] [font-family:'Liberation_Sans',sans-serif] text-[12.500px] tracking-[-0.18px] leading-[16px] whitespace-nowrap">Def_q0p1(Regelabweichung für Drehzahlregler,fnbdfua_vCofmBb_etmDlpc_UsR0o0o)/Nm</div>`;
const heads = ['-1000.000', '-400.000', '-200.000', '-100.000', '-50.000', '0.000', '50.000', '100.000', '200.000', '400.000', '600.000', '1000.000'];
sheet += `<div class="${grid}"><span class="pr-[13px]">Upm</span>` + heads.map((h, i) => `<span>${i % 2 ? '' : h}</span>`).join('') + '</div>';
sheet += `<div class="${grid}"><span class="text-left">Upm/s</span>` + heads.map((h, i) => `<span>${i % 2 ? h : ''}</span>`).join('') + '</div>';
sheet += '<div class="h-[15px]"></div>';
data.forEach((row, r) => {
  const last = r === 11;
  sheet += `<div class="${grid}"><span class="${r < 5 ? 'pr-[20px]' : 'pr-[35px]'}">${rowAxis[r].toFixed(3)}</span>` +
    row.map((v, c) => `<span class="${last && c > 0 ? 'text-[#6a78bc]' : ''}">${v.toFixed(3)}</span>`).join('') + '</div>';
});
document.getElementById('sheet').innerHTML = sheet;

let bars = '';
data.forEach((row, r) => row.forEach((v, c) => {
  if (v < 25) return;
  const h = Math.max(1, v / 320 * 13), top = (r + 1) * 15 - 3 - h;
  bars += `<rect x="${c * 7}" y="${top}" width="6" height="${h}" fill="${r === 11 ? '#fff' : '#aab2e4'}"/>`;
}));
document.getElementById('spark').innerHTML = bars;

// shared svg helpers
const line = (pts, stroke, w = 1, dash = '') => `<polyline points="${pts.map(p => p[0].toFixed(1) + ',' + p[1].toFixed(1)).join(' ')}" fill="none" stroke="${stroke}" stroke-width="${w}"${dash ? ` stroke-dasharray="${dash}"` : ''}/>`;
const label = (p, s, rot, fill) => `<text x="${p[0].toFixed(1)}" y="${p[1].toFixed(1)}" fill="${fill}" text-anchor="middle" transform="rotate(${rot} ${p[0].toFixed(1)} ${p[1].toFixed(1)})">${s}</text>`;

// 3d view of the PD map: coordinates below are page pixels
const z7 = (x, y) => [670 + x / 1.254, 500 + y / 2.82];
const kz = r => r <= 5 ? 1.8 : 1.8 - (r - 5) * 0.0683;
const proj = (u, r, v) => z7(95 + (1000 - u) * 0.5135 + 50 * r, 1098 + (1000 - u) * 0.09 - 36 * r - v * kz(r));
const stops = [[0, [8, 20, 148]], [20, [12, 36, 140]], [45, [14, 60, 120]], [70, [12, 96, 84]], [100, [8, 118, 54]], [130, [6, 124, 48]], [160, [8, 154, 16]], [200, [90, 160, 16]], [240, [160, 154, 16]], [280, [168, 96, 16]], [320, [160, 32, 0]]];
function ramp(v) {
  for (let i = 1; i < stops.length; i++) if (v <= stops[i][0]) {
    const [a, ca] = stops[i - 1], [b, cb] = stops[i], t = (v - a) / (b - a);
    return `rgb(${ca.map((c, k) => Math.round(c + (cb[k] - c) * t)).join(',')})`;
  }
  return 'rgb(160,32,0)';
}
{
  const svg = document.getElementById('surface');
  svg.setAttribute('viewBox', '681 550 1249 453');
  let out = '';
  const dim = '#444cb4', lab = '#7f88cc';
  const U = colAxis, n = 12;
  // walls
  for (let r = 0; r < n; r++) { const b = proj(1000, r, 0); out += line([b, [b[0], 550]], r === 0 ? '#c0c6ec' : dim, 1, r === 0 ? '' : '4 3'); }
  U.forEach(u => { const b = proj(u, 11, 0); out += line([b, [b[0], 550]], u === 1000 ? '#c0c6ec' : dim, 1, u === 1000 ? '' : '4 3'); });
  [200, 400].forEach(v => {
    out += line([z7(95, 1098 - v * 1.87), proj(1000, 11, v)], '#6a72c8', 1, '2 3');
    out += line([proj(1000, 11, v), proj(-1000, 11, v)], '#6a72c8', 1, '2 3');
  });
  // floor
  U.forEach(u => out += line([proj(u, 0, 0), proj(u, 11, 0)], dim, 1, '4 3'));
  for (let r = 0; r < n; r++) out += line([proj(1000, r, 0), proj(-1000, r, 0)], dim, 1, '4 3');
  out += line([z7(75, 1093), z7(1122, 1278)], '#c8cef0', 1.2);
  out += line([proj(-1000, 0, 0), proj(-1000, 11, 0)], '#c8cef0', 1.2);
  out += line([proj(1000, 0, 0), proj(1000, 11, 0)], '#8088d0');
  // mesh, back rows first
  const lerp = (a, b, t) => a + (b - a) * t;
  for (let r = 10; r >= 0; r--) {
    for (let c = 10; c >= 0; c--) {
      const val = (ci, ri, s, t) => lerp(lerp(data[ri][ci], data[ri][ci + 1], s), lerp(data[ri + 1][ci], data[ri + 1][ci + 1], s), t);
      const pt = (s, t) => {
        const u = lerp(U[c], U[c + 1], s), rr = r + t;
        return proj(u, rr, val(c, r, s, t));
      };
      const corners = [data[r][c], data[r][c + 1], data[r + 1][c], data[r + 1][c + 1]];
      const sub = Math.max(...corners) - Math.min(...corners) > 40 ? 14 : 4;
      for (let i = 0; i < sub; i++) for (let j = 0; j < sub; j++) {
        const s0 = i / sub, s1 = (i + 1) / sub, t0 = j / sub, t1 = (j + 1) / sub;
        const col = ramp(val(c, r, (s0 + s1) / 2, (t0 + t1) / 2));
        const ps = [pt(s0, t0), pt(s1, t0), pt(s1, t1), pt(s0, t1)];
        out += `<polygon points="${ps.map(p => p[0].toFixed(1) + ',' + p[1].toFixed(1)).join(' ')}" fill="${col}" stroke="${col}" stroke-width=".6"/>`;
      }
      const a = proj(U[c], r, data[r][c]), b = proj(U[c + 1], r, data[r][c + 1]), d = proj(U[c + 1], r + 1, data[r + 1][c + 1]), e = proj(U[c], r + 1, data[r + 1][c]);
      out += line([a, b], '#c8d0d4') + line([a, e], '#c8d0d4') + line([b, d], '#c8d0d4');
      out += line([e, d], r === 10 ? '#0a1a50' : '#c8d0d4');
      out += `<circle cx="${a[0]}" cy="${a[1]}" r="1" fill="#d8dcdc"/>`;
    }
  }
  // cursor
  const m = proj(-400, 11, 130);
  out += `<rect x="${m[0] - 5}" y="${m[1] - 4}" width="10" height="7" fill="#ffff70"/><rect x="${m[0] - 5}" y="${m[1] + 3}" width="10" height="4" fill="#f070c0"/>`;
  // labels
  out += label(z7(58, 352), '400.000', 0, lab) + label(z7(58, 733), '200.000', 0, lab);
  [['1000.000', 50, 1150], ['600.000', 256, 1182], ['400.000', 360, 1197], ['200.000', 463, 1218], ['100.000', 512, 1225], ['50.000', 545, 1230], ['-50.000', 585, 1240], ['-100.000', 615, 1245], ['-200.000', 668, 1260], ['-400.000', 768, 1272], ['-1000.000', 1072, 1332]].forEach(l => out += label(z7(l[1], l[2]), l[0], -15, lab));
  [['2093952.000', 1186, 1322], ['2094592.000', 1235, 1292], ['2095232.000', 1285, 1262], ['2095872.000', 1335, 1230], ['2096512.000', 1385, 1195], ['0.000', 1410, 1160], ['640.000', 1468, 1128], ['1280.000', 1522, 1100], ['1920.000', 1565, 1065]].forEach(l => out += label(z7(l[1], l[2]), l[0], 8, lab));
  out += `<text x="0" y="0" fill="#6c74c4" letter-spacing=".6" transform="translate(${z7(300, 1240)}) rotate(4.600)">Regelabweichung für Drehzahlregler (Upm)</text>`;
  out += `<text x="0" y="0" fill="#6c74c4" transform="translate(${z7(1365, 1245)}) rotate(-15)">fnbdfua_vCofmBb_etmDlpc_</text>`;
  svg.innerHTML = out;
}

// hexdump curves
{
  const svg = document.getElementById('hex');
  svg.setAttribute('viewBox', '1878 205 675 293');
  let out = `<rect x="1895" y="205" width="81" height="293" fill="#2a2ab0"/><rect x="1976" y="205" width="536" height="30" fill="#5050c8"/><rect x="1976" y="235" width="536" height="263" fill="#0000ff"/>`;
  for (let i = 0; i < 9; i++) out += line([[1878, 235.5 + i * 29], [2512, 235.5 + i * 29]], '#4a4ad8');
  for (let i = -3; i < 14; i++) { const x = 2014.5 + i * 40; if (x > 1895) out += line([[x, 235], [x, 498]], '#4a4ad8'); }
  const tail = [[1932, -22, 12], [1975, -18, 14], [2014, -4, 18], [2054, -2, 18], [2094, -2, 18], [2134, -2, 18], [2174, -2, 18], [2214, -2, 18], [2254, -4, 18], [2294, -10, 18], [2334, -16, 16], [2374, -16, 12], [2414, -18, 10], [2454, -18, 10], [2494, -20, 10]];
  tail.forEach(t => out += `<path d="M${t[0] - 5} 458q${t[1] / 4} -8 ${t[1] / 2 + 7} -${t[2] / 2}t${-t[1] / 2 - 2} -${t[2] / 2 + 4}" transform="translate(${t[1] < -15 ? 0 : 2} 0)" fill="none" stroke="#d8dcf8"/>`);
  out += `<path d="M1878 466l8-12 6-18 2 38 14-8 16-10" fill="none" stroke="#d8dcf8"/>`;
  out += `<rect x="1878" y="234" width="17" height="239" fill="none" stroke="#18d0f0" stroke-width="2"/>`;
  out += `<rect x="2512" y="205" width="41" height="293" fill="#0000a0"/>`;
  ['10000', '0E000', '0C000', '0A000', '08000', '06000', '04000', '02000'].forEach((s, i) => out += `<text x="2519" y="${250 + i * 29}" fill="#9aa4dc">${s}</text>`);
  out += `<text x="1897" y="489" fill="#8890d0">1A0</text>`;
  svg.innerHTML = out;
}

// map "Bosch II 16" 3d view
{
  const svg = document.getElementById('mapsurface');
  svg.setAttribute('viewBox', '1918 502 620 501');
  svg.setAttribute('preserveAspectRatio', 'xMinYMin slice');
  const z8 = (x, y) => [1900 + x / 2.347, 440 + y / 2.545];
  const dim = '#4a54c0', lab = '#7482cc', axis = '#c8cef0';
  let out = `<defs><linearGradient id="mapfill" gradientUnits="userSpaceOnUse" x1="0" y1="${z8(0, 172)[1]}" x2="0" y2="${z8(0, 1295)[1]}">
    <stop offset="0" stop-color="#a01000"/><stop offset=".21" stop-color="#a02400"/><stop offset=".3" stop-color="#a46a08"/><stop offset=".33" stop-color="#a09808"/><stop offset=".39" stop-color="#9ca008"/><stop offset=".5" stop-color="#10a408"/><stop offset=".56" stop-color="#06a00c"/><stop offset=".67" stop-color="#0a7040"/><stop offset=".82" stop-color="#0d4a78"/><stop offset="1" stop-color="#0f1c9c"/>
  </linearGradient></defs>`;
  // back walls
  for (let i = 0; i <= 15; i++) { const x = 148 + i * 52; out += line([z8(x, 160), z8(x, 900)], dim, 1, '4 3'); }
  for (let i = 0; i <= 12; i++) { const x = 935 + i * 38; out += line([z8(x, 160), z8(x, 900)], dim, 1, '4 3'); }
  for (let i = 0; i < 26; i++) {
    const y = 940 - i * 28.65;
    out += line([z8(148, y), z8(935, y - 200)], dim, 1, '3 4');
    out += line([z8(935, y - 200), z8(1392, y + 155)], dim, 1, '3 4');
  }
  out += line([z8(148, 160), z8(148, 940)], axis) + line([z8(1392, 160), z8(1392, 1095)], axis);
  // floor
  const A = [145, 940], D = [600, 1295], C = [1392, 1095];
  out += line([z8(...A), z8(...D)], axis, 1.3) + line([z8(...D), z8(...C)], axis, 1.3);
  out += line([z8(...C), z8(1425, 1085)], axis);

  const uVals = [600, 800, 1000, 1250, 1500, 1750, 2000, 2500, 2750, 3000, 3500, 4000, 4250, 4500, 4750, 5000, 5500, 5750, 6000, 6500];
  const vVals = [1000, 1500, 1850, 2200, 2700, 3200, 3700, 4000, 4500, 5000, 5500, 6000, 6500, 7000, 7500, 8000, 8300, 8500, 9000, 10000];
  const tu = uVals.map(u => (u - 600) / 5900), tv = vVals.map(v => (v - 1000) / 9000);
  // edges as polylines, looked up by progress along x
  const pick = (pts, t) => {
    const x = pts[0][0] + (pts[pts.length - 1][0] - pts[0][0]) * t;
    for (let i = 1; i < pts.length; i++) {
      const [x0, y0] = pts[i - 1], [x1, y1] = pts[i];
      if ((x - x0) * (x - x1) <= 0) return [x, y0 + (y1 - y0) * (x1 === x0 ? 0 : (x - x0) / (x1 - x0))];
    }
    return pts[pts.length - 1];
  };
  const left = [[600, 1295], [500, 1180], [450, 1125], [405, 1075], [350, 1000], [300, 905], [270, 750], [235, 655], [190, 510], [148, 382]];
  const right = [[1390, 965], [1335, 855], [1250, 735], [1165, 530], [1140, 415], [1110, 370], [1025, 265], [935, 172]];
  const bottom = [[600, 1295], [860, 1195], [1060, 1110], [1190, 1080], [1255, 1055], [1320, 1015], [1390, 965]];
  const top = [[148, 382], [935, 172]];
  const P = (u, v) => {
    const b = pick(bottom, u), t = pick(top, u), l = pick(left, v), r = pick(right, v);
    const out = [0, 1].map(k => (1 - v) * b[k] + v * t[k] + (1 - u) * l[k] + u * r[k]
      - ((1 - u) * (1 - v) * bottom[0][k] + u * (1 - v) * bottom[bottom.length - 1][k] + (1 - u) * v * top[0][k] + u * v * top[1][k]));
    const dent = 55 * Math.exp(-(((u - .5) / .16) ** 2 + ((v - .74) / .1) ** 2));
    const ridge = -25 * Math.sin(u * 19) * Math.exp(-(((v - .82) / .1) ** 2));
    out[1] += dent + ridge;
    out[0] += 8 * Math.sin(u * 11 + v * 7) * v * (1 - v) * 2;
    return z8(out[0], out[1]);
  };
  const nodes = tv.map(v => tu.map(u => P(u, v)));
  const sil = [...nodes[0], ...nodes.map(r => r[19]), ...nodes[19].slice().reverse(), ...nodes.map(r => r[0]).reverse()];
  out += `<polygon points="${sil.map(p => p[0].toFixed(1) + ',' + p[1].toFixed(1)).join(' ')}" fill="url(#mapfill)"/>`;
  const mesh = '#cfd6d4';
  nodes.forEach(r => out += line(r, mesh));
  for (let c = 0; c < 20; c++) out += line(nodes.map(r => r[c]), mesh);
  nodes.forEach(r => r.forEach(p => out += `<circle cx="${p[0].toFixed(1)}" cy="${p[1].toFixed(1)}" r="1" fill="${mesh}"/>`));
  // floor ticks
  tu.forEach(u => { const x = 600 + 792 * u, y = 1295 - 200 * u; const p = z8(x, y); out += `<circle cx="${p[0]}" cy="${p[1]}" r="1.200" fill="${axis}"/>`; });
  tv.forEach(v => { const x = 600 - 455 * v, y = 1295 - 355 * v; const p = z8(x, y); out += `<circle cx="${p[0]}" cy="${p[1]}" r="1.200" fill="${axis}"/>`; });
  // y axis
  for (let i = 0; i < 27; i++) { const p = z8(137, 182 + i * 28.65); out += `<text x="${p[0]}" y="${p[1]}" text-anchor="end" fill="#9aa4dc">${13500 - i * 500}</text>`; }
  const vl = [['10000', 88, 975], ['8300', 183, 1045], ['8000', 200, 1058], ['7500', 222, 1070], ['7000', 248, 1090], ['6500', 272, 1115], ['6000', 300, 1137], ['5500', 322, 1157], ['5000', 350, 1178], ['4500', 372, 1198], ['4000', 402, 1218], ['3700', 420, 1228], ['3200', 440, 1250], ['2700', 465, 1272], ['2200', 497, 1290], ['1850', 505, 1310], ['1500', 530, 1325], ['1000', 553, 1340]];
  vl.forEach(l => out += label(z8(l[1], l[2]), l[0], -22, lab));
  const ul = [['600', 632, 1345], ['800', 662, 1340], ['1000', 695, 1340], ['1250', 725, 1328], ['1500', 760, 1320], ['1750', 795, 1312], ['2000', 825, 1305], ['2500', 895, 1290], ['2750', 925, 1272], ['3000', 960, 1268], ['3500', 1030, 1252], ['4000', 1095, 1235], ['4250', 1125, 1220], ['4500', 1160, 1212], ['4750', 1195, 1202], ['5000', 1230, 1198], ['5500', 1298, 1180], ['5750', 1330, 1170], ['6000', 1362, 1165], ['6500', 1430, 1143]];
  ul.forEach(l => out += label(z8(l[1], l[2]), l[0], 28, lab));
  out += label(z8(1088, 1295), 'Status WK (-)', -17, lab);
  out += label(z8(270, 1172), '(-)', 30, lab);
  const mk = z8(603, 1293);
  out += `<rect x="${mk[0] - 5.500}" y="${mk[1] - 5.500}" width="11" height="11" fill="#f0f040"/><path d="M${mk[0] - 3} ${mk[1] - 1}l3 3 3-4" stroke="#404010" fill="none"/>`;
  svg.innerHTML = out;
}

// taskbar buttons
const starts = [49, 141, 275, 500, 724, 860, 951, 1042, 1176, 1268, 1360, 1451, 1542, 1633, 1725, 1816, 1907, 1998, 2090, 2182, 2272];
let last = 0, tb = '';
starts.forEach((s, i) => {
  tb += `<div class="shrink-0" style="width:${s - last}px"></div><div class="w-[90px] shrink-0 border-x border-t ${i === 8 ? 'bg-[#d0d2d4] border-[#e8e8e8]' : 'bg-[#aeb1b4] border-[#cfd1d3]'}"></div>`;
  last = s + 90;
});
document.getElementById('taskbar').innerHTML = tb;
</script>
</body>
</html>
